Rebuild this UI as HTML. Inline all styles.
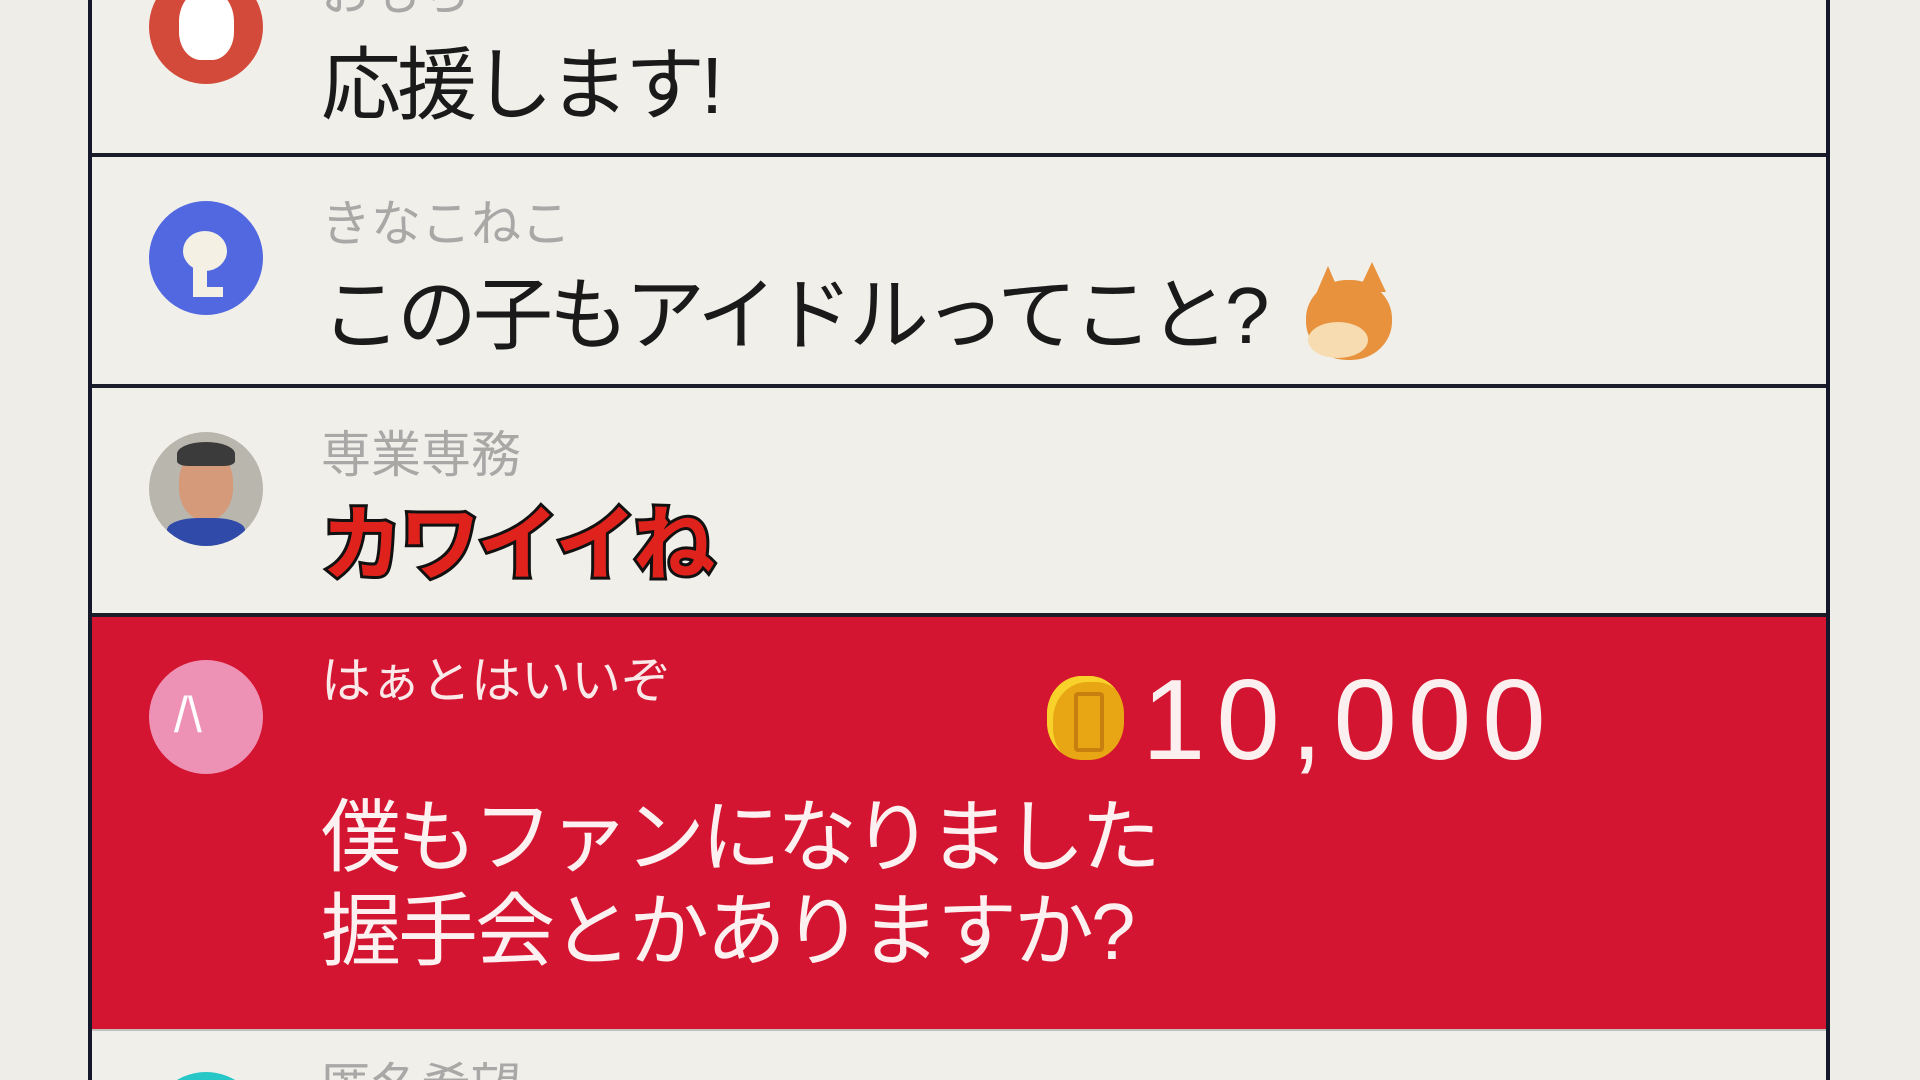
<!DOCTYPE html>
<html><head><meta charset="utf-8"><style>
html,body{margin:0;padding:0;width:1920px;height:1080px;overflow:hidden}
body{background:#eeede8;font-family:"Liberation Sans","Noto Sans CJK JP",sans-serif}
#w{position:relative;width:1920px;height:1080px;overflow:hidden}
.panel{position:absolute;left:88px;top:0;width:1734px;height:1080px;border-left:4px solid #15182a;border-right:4px solid #15182a;background:#f0efea;box-sizing:content-box}
.div{position:absolute;left:92px;width:1734px;height:4px;background:#1b1d2a}
.av{position:absolute;width:114px;height:114px;border-radius:50%;overflow:hidden}
.name{position:absolute;left:321px;font-size:50px;color:#a9a8a6;white-space:nowrap;line-height:1}
.msg{position:absolute;left:321px;font-size:80px;color:#1a1a1a;white-space:nowrap;line-height:1;letter-spacing:-4px}
.red{position:absolute;left:92px;top:617px;width:1734px;height:412px;background:#d41531}
#bot{position:absolute;left:92px;top:1031px;width:1734px;height:49px;overflow:hidden}
</style></head><body><div id="w">
<div class="panel" style="width:1734px"></div>
<div class="av" style="left:149px;top:-30px;background:#d44a3a"><div style="position:absolute;left:30px;top:20px;width:55px;height:70px;border-radius:45% 45% 40% 40%;background:#fff"></div></div>
<div style="position:absolute;left:0;top:0;width:1920px;height:20px;overflow:hidden"><div class="name" style="top:-32px">おもち</div></div>
<div class="msg" style="top:46px">応援します!</div>
<div class="div" style="top:153px"></div>
<div class="av" style="left:149px;top:201px;background:#5168e0"><div style="position:absolute;left:34px;top:30px;width:44px;height:40px;border-radius:50%;background:#f4f1e4"></div><div style="position:absolute;left:44px;top:66px;width:14px;height:30px;background:#f4f1e4"></div><div style="position:absolute;left:44px;top:86px;width:30px;height:10px;background:#f4f1e4"></div></div>
<div class="name" style="top:199px">きなこねこ</div>
<div class="msg" style="top:276px">この子もアイドルってこと?</div>
<div style="position:absolute;left:1298px;top:262px;width:106px;height:106px">
<div style="position:absolute;left:8px;top:18px;width:86px;height:80px;border-radius:48%;background:#e8923e"></div>
<div style="position:absolute;left:18px;top:4px;width:0;height:0;border-left:12px solid transparent;border-right:12px solid transparent;border-bottom:28px solid #e8923e"></div>
<div style="position:absolute;left:60px;top:0;width:0;height:0;border-left:14px solid transparent;border-right:14px solid transparent;border-bottom:30px solid #e8923e"></div>
<div style="position:absolute;left:10px;top:60px;width:60px;height:36px;border-radius:50%;background:#f6dcb0"></div>
</div>
<div class="div" style="top:384px"></div>
<div class="av" style="left:149px;top:432px;background:#b9b6ae"><div style="position:absolute;left:30px;top:18px;width:54px;height:70px;border-radius:45%;background:#d49a7a"></div><div style="position:absolute;left:28px;top:10px;width:58px;height:24px;border-radius:50% 50% 20% 20%;background:#3b3b3b"></div><div style="position:absolute;left:18px;top:86px;width:78px;height:30px;border-radius:40% 40% 0 0;background:#2f4aa8"></div></div>
<div class="name" style="top:430px">専業専務</div>
<div class="msg" style="top:505px;font-weight:bold;color:#e0221c;font-size:82px;-webkit-text-stroke:6px #111;paint-order:stroke fill;letter-spacing:-4px">カワイイね</div>
<div class="div" style="top:613px"></div>
<div class="red"></div>
<div class="av" style="left:149px;top:660px;background:#ee92b5"><div style="position:absolute;left:25px;top:30px;font-size:50px;color:#fff;line-height:1">/\</div></div>
<div class="name" style="top:656px;color:#fbe9ea;font-size:50px">はぁとはいいぞ</div>
<div style="position:absolute;left:1047px;top:676px;width:77px;height:84px;border-radius:45%;background:#e8a614;box-shadow:inset 6px 6px 0 #f8d22a"><div style="position:absolute;left:27px;top:16px;width:22px;height:52px;border:4px solid #c58010;border-radius:4px"></div></div>
<div style="position:absolute;left:1142px;top:658px;font-size:114px;color:#fbf0ef;line-height:1.1;white-space:nowrap;letter-spacing:11px">10,000</div>
<div class="msg" style="top:798px;color:#fdf0f0">僕もファンになりました</div>
<div class="msg" style="top:892px;color:#fdf0f0;letter-spacing:-3px">握手会とかありますか?</div>
<div class="div" style="top:1029px;height:2px;background:#c0bfbb"></div>
<div id="bot">
<div class="av" style="left:57px;top:41px;background:#27c7c8"></div>
<div class="name" style="left:229px;top:31px">匿名希望</div>
</div>
</div></body></html>
